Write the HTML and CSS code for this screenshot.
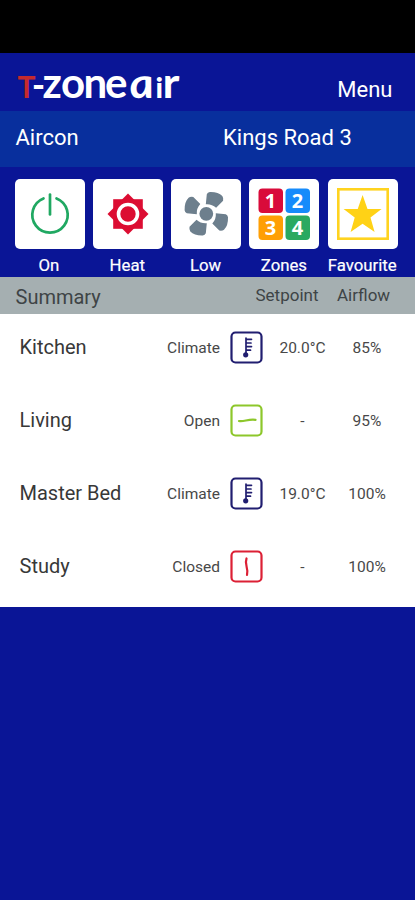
FILE: index.html
```html
<!DOCTYPE html>
<html lang="en">
<head>
<meta charset="utf-8">
<title>T-zone air</title>
<link rel="stylesheet" href="styles.css">
</head>
<body>
<div class="status"></div>
<header class="header">
  <svg class="logo" width="170" height="32" viewBox="14 70 170 32" role="img" aria-label="T-zone air">
    <text y="98" class="logo-text"><tspan class="logo-t" x="17.500">T</tspan><tspan class="logo-dash" x="32" y="97">-</tspan><tspan y="98" x="42.500 61 83.500 105">zone</tspan></text>
    <text class="logo-text logo-a" transform="translate(131 98) skewX(8) scale(1.120 1)">a</text>
    <text y="98" class="logo-text"><tspan class="logo-i" x="155.500">i</tspan></text>
    <text class="logo-text" transform="translate(162.500 98) scale(1.080 1)">r</text>
  </svg>
  <span class="menu">Menu</span>
</header>
<div class="unit"><span>Aircon</span><span class="site">Kings Road 3</span></div>
<nav class="tiles">
  <div class="tile">
    <svg viewBox="0 0 70 70"><g fill="none" stroke="#20a862" stroke-width="2.700" stroke-linecap="round"><path d="M28.500 19.500A17.700 17.700 0 1 0 41.500 19.500"/><path d="M35 15.500V35.500"/></g></svg>
    <span>On</span>
  </div>
  <div class="tile">
    <svg viewBox="0 0 70 70"><g fill="#dc0d32"><rect x="20.200" y="20.200" width="29.600" height="29.600"/><rect x="20.500" y="20.500" width="29" height="29" transform="rotate(45 35 35)"/></g><circle cx="35" cy="35" r="9.500" fill="#dc0d32" stroke="#fff" stroke-width="3.600"/></svg>
    <span>Heat</span>
  </div>
  <div class="tile">
    <svg viewBox="0 0 70 70"><g fill="#6d7f8d" transform="translate(.3 -.2)"><circle cx="35" cy="35" r="6.900"/><path id="blade" d="M34.500 25.500L35.500 15.500Q36.300 13.500 38.500 13.300Q46.800 13 51 17.300Q52.300 19 51.800 22L44.800 29Q40.500 25 34.500 25.500Z"/><use href="#blade" transform="rotate(90 35 35)"/><use href="#blade" transform="rotate(180 35 35)"/><use href="#blade" transform="rotate(270 35 35)"/></g></svg>
    <span>Low</span>
  </div>
  <div class="tile">
    <svg viewBox="0 0 70 70"><rect x="9.500" y="9.500" width="24.500" height="24.500" rx="4" fill="#d90b3a"/><rect x="36.500" y="9.500" width="24.500" height="24.500" rx="4" fill="#168bfb"/><rect x="9.500" y="36.500" width="24.500" height="24.500" rx="4" fill="#ff9f05"/><rect x="36.500" y="36.500" width="24.500" height="24.500" rx="4" fill="#2aa961"/><g class="digits"><text x="21.500" y="28.500">1</text><text x="48.500" y="28.500">2</text><text x="21.500" y="55.500">3</text><text x="48.500" y="55.500">4</text></g></svg>
    <span>Zones</span>
  </div>
  <div class="tile">
    <svg viewBox="0 0 70 70"><rect x="10.300" y="10.300" width="49.400" height="49.400" fill="none" stroke="#ffd31f" stroke-width="2.600"/><path fill="#ffd216" d="M34.600 16L39.500 30H53.600L42.500 38.600L46.600 53L34.600 44.700L22.600 53L26.700 38.600L15.600 30H29.700Z"/></svg>
    <span>Favourite</span>
  </div>
</nav>
<div class="summary"><span class="title">Summary</span><span class="setpoint">Setpoint</span><span class="airflow">Airflow</span></div>
<main class="zones">
  <div class="zone"><span class="name">Kitchen</span><span class="mode">Climate</span>
    <svg class="badge climate" viewBox="0 0 33 33"><rect x="1.500" y="1.500" width="30" height="30" rx="4"/><path d="M16 7V23M16 8.300H21.500M16 12H21M16 15.600H21.500M16 19.200H20.500"/><circle cx="15.700" cy="23.800" r="1.500"/></svg>
    <span class="value">20.0°C</span><span class="flow">85%</span></div>
  <div class="zone"><span class="name">Living</span><span class="mode">Open</span>
    <svg class="badge open" viewBox="0 0 33 33"><rect x="1.500" y="1.500" width="30" height="30" rx="4"/><path d="M9 17C14 18 18 14.800 25.500 15.800"/></svg>
    <span class="value">-</span><span class="flow">95%</span></div>
  <div class="zone"><span class="name">Master Bed</span><span class="mode">Climate</span>
    <svg class="badge climate" viewBox="0 0 33 33"><rect x="1.500" y="1.500" width="30" height="30" rx="4"/><path d="M16 7V23M16 8.300H21.500M16 12H21M16 15.600H21.500M16 19.200H20.500"/><circle cx="15.700" cy="23.800" r="1.500"/></svg>
    <span class="value">19.0°C</span><span class="flow">100%</span></div>
  <div class="zone"><span class="name">Study</span><span class="mode">Closed</span>
    <svg class="badge closed" viewBox="0 0 33 33"><rect x="1.500" y="1.500" width="30" height="30" rx="4"/><path d="M16.500 8.500C14 15 19 18 17 25"/></svg>
    <span class="value">-</span><span class="flow">100%</span></div>
</main>
</body>
</html>
```

FILE: styles.css
```css
* { box-sizing: border-box; }
body {
  margin: 0;
  height: 900px;
  overflow: hidden;
  background: #0a1596;
  color: #fff;
  font-family: Roboto, "Liberation Sans", sans-serif;
}
.status { height: 53px; background: #000; }
.header {
  height: 58px;
  padding: 17px 22.500px 0 14px;
  display: flex;
  justify-content: space-between;
  align-items: flex-start;
}
.logo { display: block; overflow: visible; }
.logo-text { font-family: Lato, sans-serif; font-weight: 700; font-size: 42px; fill: #fff; }
.logo-t { font-size: 30px; fill: #c52a2e; }
.logo-dash { font-size: 35px; font-weight: 900; }
.logo-a { font-style: italic; }
.logo-i { font-size: 29px; font-weight: 900; }
.menu { font-size: 22px; line-height: 26px; margin-top: 7px; }
.unit {
  height: 56px;
  padding: 14px 15.500px 0;
  display: grid;
  grid-template-columns: 207.500px 1fr;
  background: #082f9d;
  font-size: 22px;
  line-height: 26px;
}
.tiles {
  height: 109.500px;
  padding: 12px 17px 0 14.500px;
  display: flex;
  gap: 8.300px;
}
.tile {
  width: 70px;
  display: flex;
  flex-direction: column;
  align-items: center;
  font-size: 16.800px;
  line-height: 20px;
  white-space: nowrap;
}
.tile > svg { width: 70px; height: 70px; border-radius: 5px; background: #fff; flex: none; }
.tile > span { margin: 6px 1px 0 0; -webkit-text-stroke: .2px #fff; }
.digits { font-family: "Open Sans", sans-serif; font-size: 20px; font-weight: 700; fill: #fff; text-anchor: middle; }
.summary {
  height: 37.500px;
  padding: 0 15.500px;
  display: grid;
  grid-template-columns: 240px 81.500px 1fr;
  background: #a5afb1;
  color: #3e4446;
  font-size: 17px;
  line-height: 37px;
}
.summary .title { font-size: 20px; line-height: 41px; }
.zones { height: 293px; background: #fff; color: #484848; }
.zone {
  height: 73.300px;
  padding-left: 19.500px;
  display: grid;
  grid-template-columns: 110.500px 90px 53px 59px 70px;
  align-items: start;
  padding-top: 16.500px;
  font-size: 15.500px;
  line-height: 35px;
}
.zone .name { font-size: 20px; line-height: 33px; color: #383838; white-space: nowrap; }
.mode { text-align: right; }
.badge { width: 33px; height: 33px; margin-left: 10px; fill: none; stroke-width: 2.200; stroke-linecap: round; }
.climate { stroke: #211e70; }
.climate path { stroke-width: 1.700; }
.climate circle { fill: #211e70; }
.open { stroke: #8dc72b; }
.closed { stroke: #dc2035; }
.value, .flow { text-align: center; }
```
